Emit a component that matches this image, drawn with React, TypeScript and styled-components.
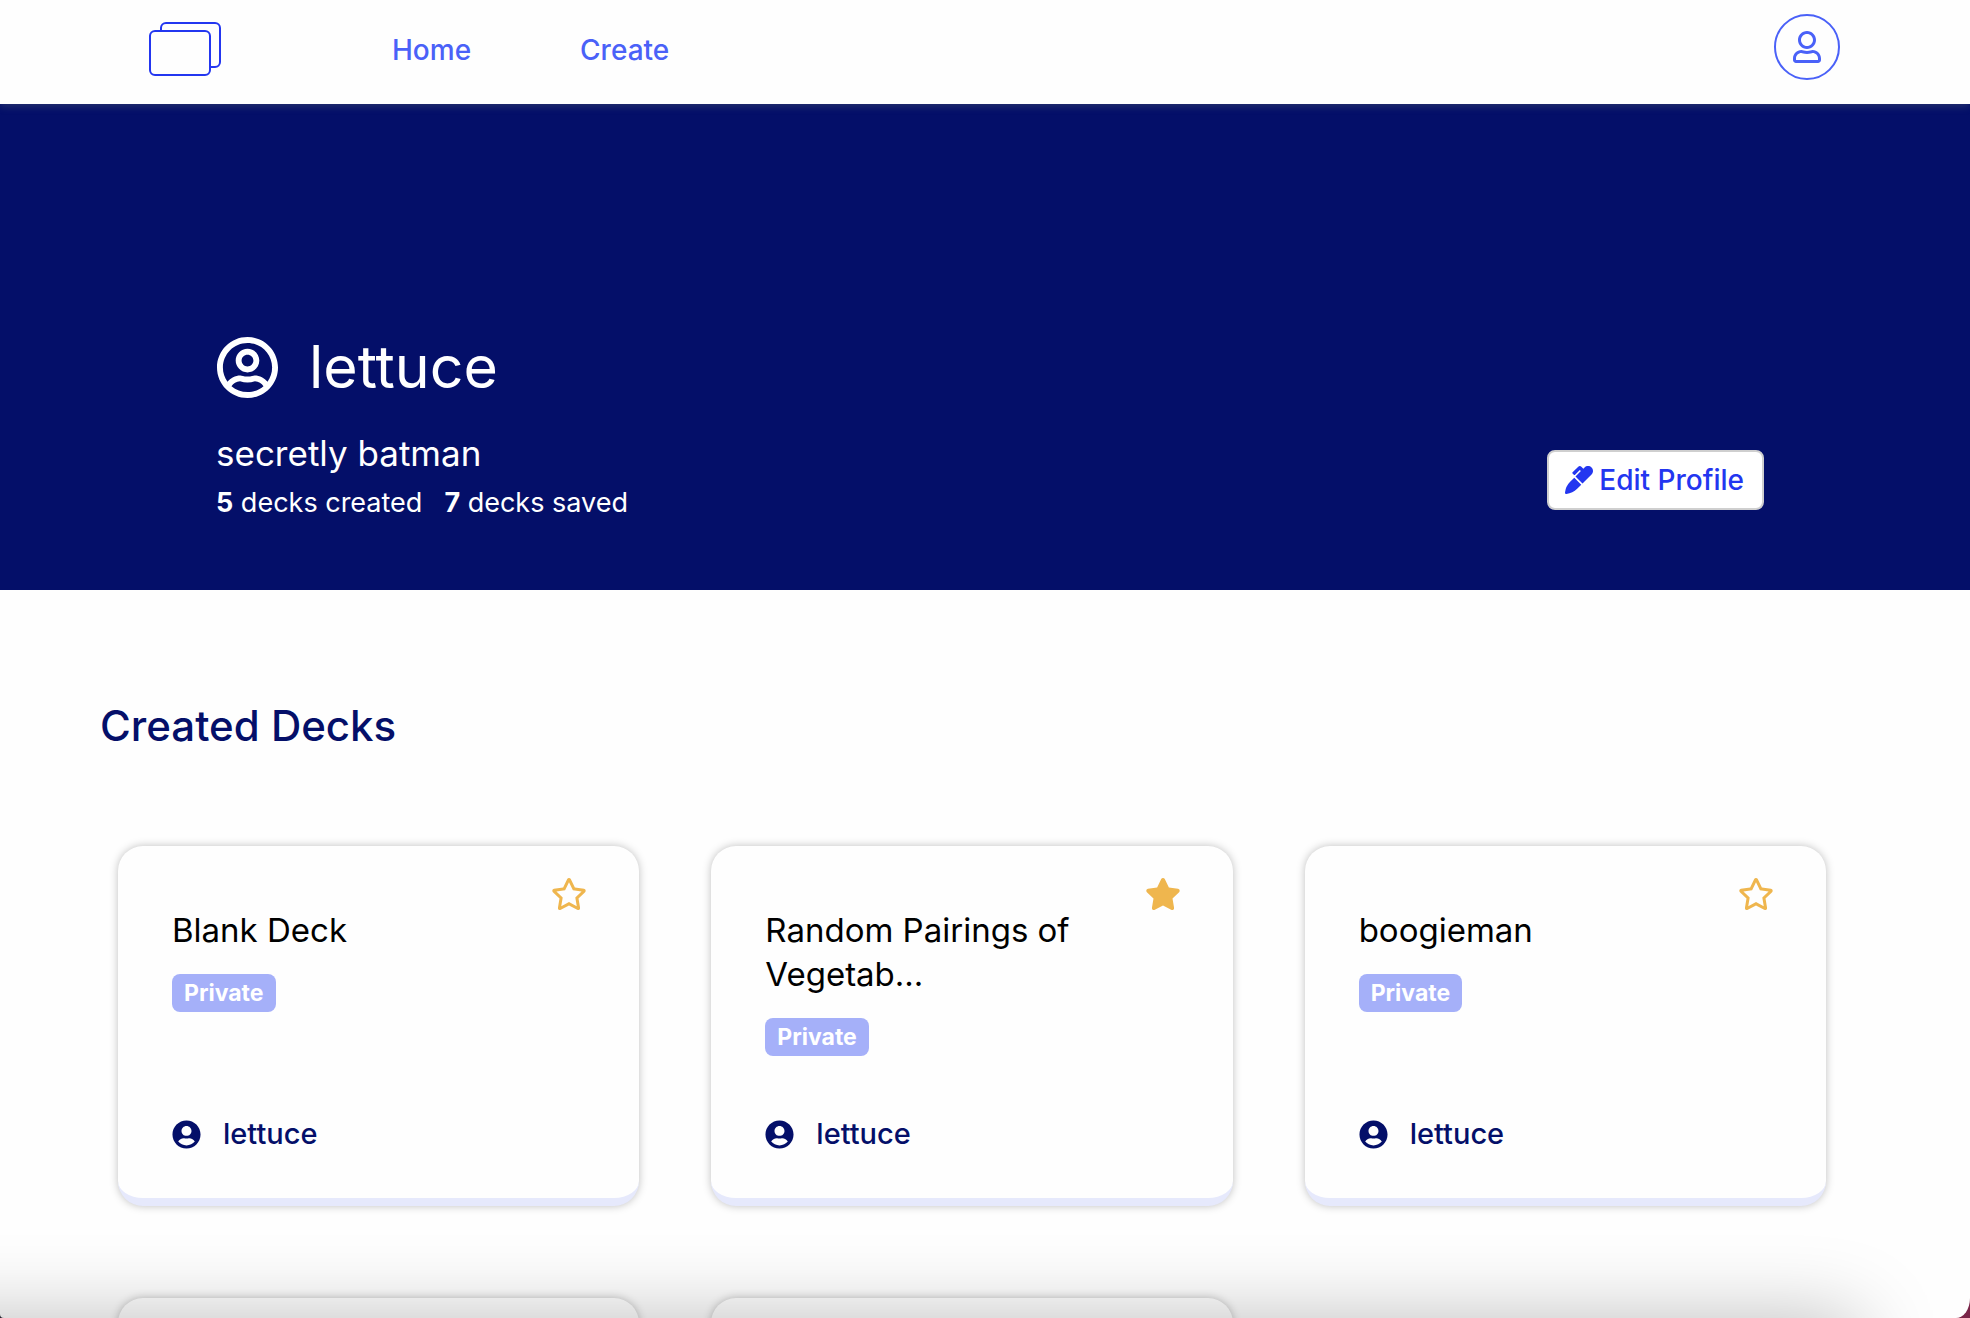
import React from "react";
import styled, { createGlobalStyle } from "styled-components";
import { FaRegUser, FaRegUserCircle, FaUserCircle, FaMarker, FaRegStar, FaStar } from "react-icons/fa";

const navy = "#040f69";
const blue = "#2336f0";
const link = "#4a61f8";

const Global = createGlobalStyle`
  *, *::before, *::after { box-sizing: border-box; }
  html, body, #root { height: 100%; }
  body {
    margin: 0;
    overflow: hidden;
    background: linear-gradient(to right, #23232f 50%, #7a2548 50%);
    color: #000;
    font-family: Inter, "Liberation Sans", sans-serif;
  }
  h1, h2, h3, p { margin: 0; }
  button { font: inherit; cursor: pointer; }
  svg { display: block; flex: none; }
`;

const Page = styled.div`
  position: relative;
  height: 100vh;
  overflow: hidden;
  border-radius: 0 0 14px 4px / 0 0 20px 4px;
  background: #fefefe;
`;

const Header = styled.header`
  position: relative;
  z-index: 1;
  display: flex;
  align-items: center;
  height: 104px;
  padding: 0 130px 10px 148px;
  background: #fefefe;
  box-shadow: 0 2px 8px rgba(120, 140, 120, 0.3);
`;

const LogoLink = styled.a`
  display: block;
  margin-right: 170px;
  padding-top: 4px;
`;

const Nav = styled.nav`
  display: flex;
  gap: 109px;
  padding-top: 6px;
`;

const NavLink = styled.a`
  color: ${link};
  font-size: 28px;
  line-height: 36px;
  font-weight: 500;
  text-decoration: none;
`;

const AvatarButton = styled.button`
  display: grid;
  place-items: center;
  width: 66px;
  height: 66px;
  margin-left: auto;
  padding: 0;
  border: 2px solid ${link};
  border-radius: 50%;
  background: transparent;
  color: ${link};
`;

const Hero = styled.section`
  display: flex;
  align-items: flex-end;
  justify-content: space-between;
  height: 486px;
  padding: 0 206px 69px 216px;
  background: ${navy};
  color: #fff;
`;

const UserLine = styled.div`
  display: flex;
  align-items: center;
  gap: 30px;
  margin-bottom: 28px;
`;

const UserName = styled.h1`
  font-size: 59px;
  line-height: 72px;
  font-weight: 400;
`;

const Bio = styled.p`
  font-size: 35px;
  line-height: 44px;
`;

const Stats = styled.p`
  display: flex;
  gap: 22px;
  padding-top: 10px;
  font-size: 27px;
  line-height: 36px;
`;

const EditButton = styled.button`
  display: flex;
  align-items: center;
  gap: 6px;
  height: 60px;
  margin-bottom: 11px;
  padding: 0 18px 0 16px;
  border: 2px solid #cfcfcf;
  border-radius: 8px;
  background: #fff;
  color: ${blue};
  && { font-size: 28px; font-weight: 500; }
`;

const Decks = styled.main`
  padding: 110px 144px 0 100px;
`;

const SectionTitle = styled.h2`
  color: ${navy};
  font-size: 42px;
  line-height: 52px;
  font-weight: 500;
`;

const Grid = styled.div`
  display: grid;
  grid-template-columns: repeat(3, 1fr);
  gap: 92px 72px;
  padding: 94px 0 0 18px;
`;

const Card = styled.article`
  display: flex;
  flex-direction: column;
  height: 360px;
  padding: 30px 52px 46px 54px;
  border-bottom: 8px solid #e6e9fc;
  border-radius: 25px;
  background: #fefefe;
  box-shadow: 0 0 8px rgba(0, 0, 0, 0.25);
`;

const StarButton = styled.button`
  display: grid;
  place-items: center;
  align-self: flex-end;
  height: 32px;
  padding: 0;
  border: 0;
  background: none;
  color: #efb64e;
`;

const DeckTitle = styled.h3`
  max-width: 340px;
  margin-bottom: 22px;
  font-size: 33px;
  line-height: 44px;
  font-weight: 400;
`;

const Badge = styled.span`
  align-self: flex-start;
  padding: 0 12px;
  border-radius: 8px;
  background: #a5b0f9;
  color: #fff;
  font-size: 23px;
  line-height: 38px;
  font-weight: 700;
`;

const Owner = styled.a`
  display: flex;
  align-items: center;
  gap: 22px;
  margin-top: auto;
  color: ${navy};
  font-size: 29px;
  line-height: 36px;
  font-weight: 500;
  text-decoration: none;
`;

const BottomShade = styled.div`
  position: absolute;
  inset: auto 0 0 0;
  height: 100px;
  overflow: hidden;
  pointer-events: none;

  &::before {
    content: "";
    position: absolute;
    inset: 100px 112px -100px -100px;
    box-shadow: 0 0 80px rgba(0, 0, 0, 0.26);
  }
`;

const decks = [
  { title: "Blank Deck", starred: false },
  { title: "Random Pairings of Vegetab...", starred: true },
  { title: "boogieman", starred: false },
  { title: "", starred: false },
  { title: "", starred: false },
];

function DeckCard({ title, starred }: { title: string; starred: boolean }) {
  if (!title) return <Card />;
  return (
    <Card>
      <StarButton aria-label={starred ? "Unstar deck" : "Star deck"} aria-pressed={starred}>
        {starred ? <FaStar size={36} /> : <FaRegStar size={36} />}
      </StarButton>
      <DeckTitle>{title}</DeckTitle>
      <Badge>Private</Badge>
      <Owner href="#lettuce">
        <FaUserCircle />
        lettuce
      </Owner>
    </Card>
  );
}

export default function App() {
  return (
    <>
      <Global />
      <Page>
        <Header>
          <LogoLink href="#home" aria-label="Home page">
            <svg width="74" height="56" viewBox="0 0 74 56" fill="#fefefe" stroke={blue} strokeWidth="2">
              <rect x="13" y="2" width="59" height="44" rx="5" />
              <rect x="2" y="10" width="60" height="44" rx="5" />
            </svg>
          </LogoLink>
          <Nav>
            <NavLink href="#home">Home</NavLink>
            <NavLink href="#create">Create</NavLink>
          </Nav>
          <AvatarButton aria-label="Account">
            <FaRegUser size={32} />
          </AvatarButton>
        </Header>
        <Hero>
          <div>
            <UserLine>
              <FaRegUserCircle size={63} />
              <UserName>lettuce</UserName>
            </UserLine>
            <Bio>secretly batman</Bio>
            <Stats>
              <span><b>5</b> decks created</span>
              <span><b>7</b> decks saved</span>
            </Stats>
          </div>
          <EditButton>
            <FaMarker />
            Edit Profile
          </EditButton>
        </Hero>
        <Decks>
          <SectionTitle>Created Decks</SectionTitle>
          <Grid>
            {decks.map((deck, i) => (
              <DeckCard key={i} {...deck} />
            ))}
          </Grid>
        </Decks>
        <BottomShade />
      </Page>
    </>
  );
}
